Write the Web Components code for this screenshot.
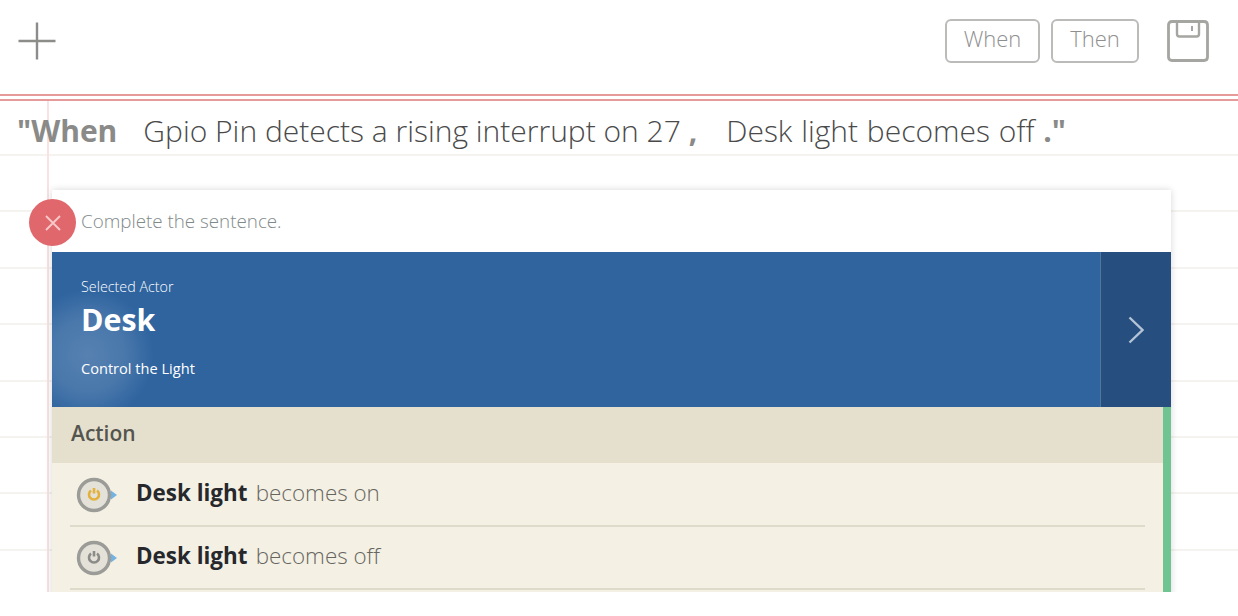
<!DOCTYPE html>
<html>
<head>
<meta charset="utf-8">
<style>
    html,body{
        margin: 0;
        padding: 0;
        background: white;
        font-family: "Open Sans", "Liberation Sans", sans-serif;
    }
    #page{
        height: 592px;
        overflow: hidden;
        display: flex;
        flex-direction: column;
    }
</style>
</head>
<body>
<div id="page">
    <rule-toolbar></rule-toolbar>
    <rule-paper>
        <rule-sentence></rule-sentence>
        <actor-card name="Desk" caption="Control the Light">
            <action-row lit verb="becomes on"></action-row>
            <action-row verb="becomes off"></action-row>
        </actor-card>
    </rule-paper>
</div>

<script>
class RuleToolbar extends HTMLElement {
    constructor(){
        super()
        this.attachShadow({ mode: 'open' })
        this.shadowRoot.innerHTML = `
        <style>
            :host{
                display: flex;
                align-items: center;
                justify-content: space-between;
                height: 96px;
                flex: none;
                padding: 0 29px 12px 18px;
                box-sizing: border-box;
                border-bottom: 2px solid #e79a9a;
            }
            svg{ display: block; }
            #right{
                display: flex;
                align-items: center;
            }
            .btn{
                box-sizing: border-box;
                height: 44px;
                display: flex;
                align-items: center;
                justify-content: center;
                border: 2px solid #bbbbb9;
                border-radius: 6px;
                font-size: 22px;
                font-weight: 300;
                color: #8f8f8f;
                padding-bottom: 6px;
            }
            #when{ width: 95px; margin-right: 11px; }
            #then{ width: 88px; margin-right: 28px; }
        </style>
        <svg width="38" height="38" viewBox="0 0 38 38">
            <path d="M0.5 19 H37.5 M19 0.5 V37.5" stroke="#8c8c88" stroke-width="2.4" fill="none"/>
        </svg>
        <div id="right">
            <div class="btn" id="when">When</div>
            <div class="btn" id="then">Then</div>
            <svg width="42" height="42" viewBox="0 0 42 42">
                <path d="M5 1.5 H37 Q40.500 1.500 40.500 5 V37 Q40.500 40.500 37 40.500 H5 Q1.500 40.500 1.500 37 V5 Q1.500 1.500 5 1.500 Z" stroke="#a5a5a1" stroke-width="2.800" fill="none"/>
                <path d="M10 2 V14 Q10 16.500 12.500 16.500 H29.500 Q32 16.500 32 14 V2" stroke="#a5a5a1" stroke-width="2.400" fill="none"/>
                <path d="M25 6 V11" stroke="#a5a5a1" stroke-width="2" fill="none"/>
            </svg>
        </div>`
    }
}

class RulePaper extends HTMLElement {
    constructor(){
        super()
        this.attachShadow({ mode: 'open' })
        this.shadowRoot.innerHTML = `
        <style>
            :host{
                display: block;
                flex: 1;
                position: relative;
                box-sizing: border-box;
                border-top: 2px solid #e79a9a;
                margin-top: 3px;
                padding: 0 67px 0 52px;
                background-color: white;
                background-image:
                    linear-gradient(to right, transparent 47px, #f8e2e2 47px, #f8e2e2 49px, transparent 49px),
                    repeating-linear-gradient(to bottom, transparent 0, transparent 53px, #f4f3f0 53px, #f4f3f0 55px, transparent 55px, transparent 56.400px);
            }
        </style>
        <slot></slot>`
    }
}

class RuleSentence extends HTMLElement {
    constructor(){
        super()
        this.attachShadow({ mode: 'open' })
        this.shadowRoot.innerHTML = `
        <style>
            :host{
                display: flex;
                align-items: baseline;
                height: 89px;
                margin-left: -35px;
                margin-right: -67px;
                padding-top: 9px;
                box-sizing: border-box;
                font-size: 30px;
                font-weight: 300;
                color: #4a4a4a;
                white-space: pre;
            }
            b{ font-weight: 700; color: #8a8a88; }
            #first{ margin-right: 26px; }
            #second{ margin-left: 29px; word-spacing: 1px; }
        </style>
        <b id="first">"When</b><span>Gpio Pin detects a rising interrupt on 27 <b>,</b></span><span id="second">Desk light becomes off <b>."</b></span>`
    }
}

class ActorCard extends HTMLElement {
    constructor(){
        super()
        this.attachShadow({ mode: 'open' })
        const name = this.getAttribute('name')
        const caption = this.getAttribute('caption')
        this.shadowRoot.innerHTML = `
        <style>
            :host{
                display: block;
                position: relative;
                background: white;
                box-shadow: 0 0 7px rgba(0,0,0,0.16);
            }
            #close{
                position: absolute;
                left: -23px;
                top: 9px;
                width: 47px;
                height: 47px;
                border-radius: 50%;
                background: #e0686c;
                display: flex;
                align-items: center;
                justify-content: center;
            }
            #prompt{
                height: 62px;
                box-sizing: border-box;
                padding: 18px 0 0 29px;
                font-size: 18.800px;
                line-height: 26px;
                font-weight: 300;
                color: #7f8a8a;
            }
            #actor{
                height: 155px;
                display: flex;
                background: #2f649f;
                color: white;
            }
            #info{
                flex: 1;
                box-sizing: border-box;
                padding: 25px 0 0 29px;
                background: radial-gradient(circle 66px at 36px 103px, rgba(255,255,255,0.19) 0, rgba(255,255,255,0.13) 55%, rgba(255,255,255,0) 100%);
            }
            #small{ font-size: 14.300px; line-height: 20px; font-weight: 300; }
            #name{ font-size: 30.400px; line-height: 46px; font-weight: 700; }
            #caption{ font-size: 14.600px; line-height: 20px; font-weight: 400; margin-top: 15px; }
            #next{
                flex: none;
                width: 71px;
                box-sizing: border-box;
                border-left: 1px solid #52779f;
                background: #264f80;
                display: flex;
                align-items: center;
                justify-content: center;
            }
            #list{
                background: #f4f0e4;
                border-right: 8px solid #6fc491;
                min-height: 200px;
            }
            #head{
                height: 56px;
                box-sizing: border-box;
                padding: 0 0 4px 19px;
                margin-bottom: 1px;
                display: flex;
                align-items: center;
                background: #e5dfcd;
                font-size: 21px;
                font-weight: 600;
                color: #55554f;
            }
            svg{ display: block; }
        </style>
        <div id="close">
            <svg width="16" height="16" viewBox="0 0 16 16"><path d="M1 1 L15 15 M15 1 L1 15" stroke="#f6c9c9" stroke-width="1.800" fill="none"/></svg>
        </div>
        <div id="prompt">Complete the sentence.</div>
        <div id="actor">
            <div id="info">
                <div id="small">Selected Actor</div>
                <div id="name">${name}</div>
                <div id="caption">${caption}</div>
            </div>
            <div id="next">
                <svg width="16" height="28" viewBox="0 0 16 28"><path d="M1.500 1.500 L14.500 14 L1.500 26.500" stroke="#b4c4d6" stroke-width="2.400" fill="none"/></svg>
            </div>
        </div>
        <div id="list">
            <div id="head">Action</div>
            <slot></slot>
        </div>`
    }
}

class ActionRow extends HTMLElement {
    constructor(){
        super()
        this.attachShadow({ mode: 'open' })
        const power = this.hasAttribute('lit') ? '#e3b23c' : '#8b8b87'
        this.shadowRoot.innerHTML = `
        <style>
            :host{
                display: flex;
                align-items: center;
                height: 63px;
                box-sizing: border-box;
                margin: 0 18px;
                padding: 0 0 4px 6px;
                border-bottom: 2px solid #dfdbca;
                font-size: 22.400px;
                font-weight: 300;
                color: #666660;
                white-space: pre;
            }
            svg{ display: block; margin: 4px 19px 0 0; flex: none; }
            b{ font-weight: 700; color: #26282c; }
            span{ margin-left: 2.500px; }
        </style>
        <svg width="41" height="36" viewBox="0 0 41 36">
            <path d="M32 12 L36 18 L32 24 Z" fill="#9cc8e6"/>
            <path d="M35 13.500 L41 18 L35 22.500 Z" fill="#74b3e0"/>
            <circle cx="18" cy="18" r="15.500" fill="#e4e1d8" stroke="#9b9b97" stroke-width="3.400"/>
            <path d="M15 13.500 A5 5 0 1 0 21 13.500 M18 11 V16.500" stroke="${power}" stroke-width="2.600" fill="none"/>
        </svg>
        <b>Desk light</b><span> ${this.getAttribute('verb')}</span>`
    }
}

window.customElements.define('rule-toolbar', RuleToolbar)
window.customElements.define('rule-paper', RulePaper)
window.customElements.define('rule-sentence', RuleSentence)
window.customElements.define('actor-card', ActorCard)
window.customElements.define('action-row', ActionRow)
</script>
</body>
</html>
